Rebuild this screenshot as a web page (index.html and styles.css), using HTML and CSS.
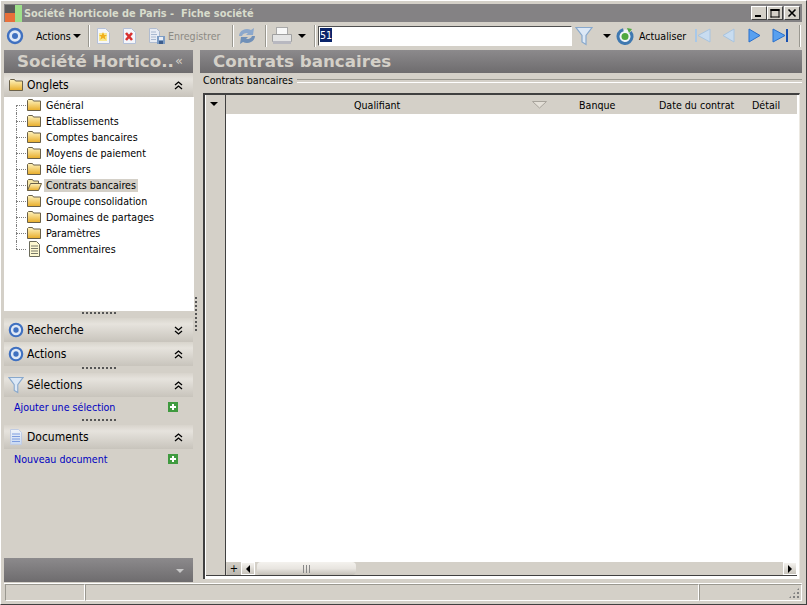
FILE: index.html
```html
<!DOCTYPE html>
<html lang="fr">
<head>
<meta charset="utf-8">
<title>Fiche société</title>
<link rel="stylesheet" href="styles.css">
</head>
<body>
<svg class="defs" width="0" height="0">
  <defs>
    <linearGradient id="fold" x1="0" y1="0" x2="0" y2="1"><stop offset="0" stop-color="#fff4c0"/><stop offset="1" stop-color="#e8ac28"/></linearGradient>
    <linearGradient id="disc" x1="0" y1="0" x2="0" y2="1"><stop offset="0" stop-color="#f0f4fa"/><stop offset="1" stop-color="#c8d8f0"/></linearGradient>
    <symbol id="folder" viewBox="0 0 16 14"><path d="M1.500 12.500V2.500l1-1h4l1 1.500h7v9.500z" fill="url(#fold)" stroke="#6a6048"/></symbol>
    <symbol id="folderopen" viewBox="0 0 16 14"><path d="M1.500 12.500V2.500l1-1h4l1 1.500h5v2" fill="#f6e6a6" stroke="#6a6048"/><path d="M1.500 12.500l3-7h11l-3 7z" fill="url(#fold)" stroke="#6a6048"/></symbol>
    <symbol id="target" viewBox="0 0 18 18"><circle cx="9" cy="9" r="7" fill="#dfe8f6" stroke="#3f70c0" stroke-width="2.400"/><circle cx="9" cy="9" r="3" fill="#3f70c0"/></symbol>
    <symbol id="funnel" viewBox="0 0 18 20"><path d="M1 1.500h16l-6 8v9l-4-2.500v-6.500z" fill="#dce8f6" stroke="#88a8cc" stroke-width="1.200"/></symbol>
    <symbol id="plus" viewBox="0 0 10 10"><rect width="10" height="10" fill="#3f9a3f"/><path d="M5 2v6M2 5h6" stroke="#fff" stroke-width="2"/></symbol>
    <symbol id="chevup" viewBox="0 0 9 9"><path d="M1 4l3.500-3 3.500 3M1 8l3.500-3 3.500 3" fill="none" stroke="#000" stroke-width="1.300"/></symbol>
    <symbol id="chevdown" viewBox="0 0 9 9"><path d="M1 1l3.500 3 3.500-3M1 5l3.500 3 3.500-3" fill="none" stroke="#000" stroke-width="1.300"/></symbol>
  </defs>
</svg>
<div class="window">
  <header class="titlebar">
    <svg class="logo" width="18" height="18" viewBox="0 0 18 18"><rect x="1" y="1" width="10" height="8" fill="#5a5a5a"/><rect x="1" y="9" width="10" height="9" fill="#e8703a"/><rect x="11" y="1" width="7" height="17" fill="#9ee08a"/></svg>
    <span class="title-text">Société Horticole de Paris -  Fiche société</span>
    <div class="wincontrols">
      <span class="winbtn"><svg width="10" height="10"><rect x="1" y="7" width="6" height="2"/></svg></span>
      <span class="winbtn"><svg width="10" height="10"><path d="M.5 1.500h9M1 1v8.500M.5 9h9M9 1v8.500M.5 2.500h9" fill="none" stroke="#000"/></svg></span>
      <span class="winbtn close"><svg width="10" height="10"><path d="M1.500 1.500l7 7M8.500 1.500l-7 7" stroke="#000" stroke-width="1.600"/></svg></span>
    </div>
  </header>

  <div class="toolbar">
    <svg class="tb-target" width="18" height="18"><use href="#target"/></svg>
    <span class="tb-actions">Actions</span><span class="caret"></span>
    <span class="sep s1"></span>
    <svg class="tb-new" width="14" height="16" viewBox="0 0 14 16"><path d="M1.500.5h8l4 4v11h-12z" fill="#f4f6fb" stroke="#b4c0d8"/><rect x="3" y="5" width="8" height="8" fill="#f8e890"/><path d="M7 4l1.200 3h2.800l-2.200 1.800 1 3-2.800-1.900-2.800 1.900 1-3-2.200-1.800h2.800z" fill="#f0b020"/></svg>
    <svg class="tb-del" width="14" height="16" viewBox="0 0 14 16"><path d="M1.500.5h8l4 4v11h-12z" fill="#f4f6fb" stroke="#b4c0d8"/><path d="M4 5l6 7M10 5l-6 7" stroke="#d83030" stroke-width="2.600"/></svg>
    <svg class="tb-save-ico" width="16" height="16" viewBox="0 0 16 16"><path d="M.5.500h7l3 3v11h-10z" fill="#e8ecf4" stroke="#b0bcd0"/><path d="M2 4h5M2 6.500h6M2 9h5M2 11.500h5" stroke="#a8b8d0"/><rect x="8" y="8" width="8" height="8" fill="#7c9cc4"/><rect x="10" y="9" width="4" height="3" fill="#e8ecf4"/><rect x="10" y="13" width="4" height="3" fill="#3c5c8c"/></svg>
    <span class="tb-save">Enregistrer</span>
    <span class="sep s2"></span>
    <svg class="tb-sync" width="20" height="20" viewBox="0 0 20 20"><path d="M2 10a8 7 0 0 1 12-6l3-2-1 7h-7l2-2a5 4 0 0 0-6 3z" fill="#8ca8cc"/><path d="M18 10a8 7 0 0 1-12 6l-3 2 1-7h7l-2 2a5 4 0 0 0 6-3z" fill="#7090b8"/></svg>
    <span class="sep s3"></span>
    <svg class="tb-print" width="20" height="18" viewBox="0 0 20 18"><rect x="4.500" y=".5" width="11" height="7" fill="#f8f8f8" stroke="#a8a8a8"/><path d="M.5 7.500h19v7h-19z" fill="#e4e4e4" stroke="#a0a0a0"/><rect x="1" y="14" width="18" height="3" fill="#b8b8c0"/></svg>
    <span class="caret c-print"></span>
    <span class="sep s4"></span>
    <div class="searchbox"><span class="selected">51</span></div>
    <svg class="tb-funnel" width="18" height="20"><use href="#funnel"/></svg>
    <span class="caret c-funnel"></span>
    <svg class="tb-refresh" width="18" height="18" viewBox="0 0 18 18"><circle cx="9" cy="9.500" r="7" fill="#f0f4f8" stroke="#3f78b0" stroke-width="3" stroke-dasharray="36 8" transform="rotate(-40 9 9.500)"/><circle cx="9" cy="9.500" r="3.500" fill="#50a840"/><path d="M11 1l5 1-3 4z" fill="#50a840"/></svg>
    <span class="tb-refresh-label">Actualiser</span>
    <svg class="nav n-first" width="16" height="15" viewBox="0 0 16 15"><rect x="0" y="1" width="2" height="13" fill="#a8c8e8"/><path d="M15 1v13L3 7.500z" fill="#c8dcf0" stroke="#a8c4e0"/></svg>
    <svg class="nav n-prev" width="13" height="15" viewBox="0 0 13 15"><path d="M12 1v13L1 7.500z" fill="#c8dcf0" stroke="#a8c4e0"/></svg>
    <svg class="nav n-next" width="13" height="15" viewBox="0 0 13 15"><path d="M1 1v13l11-6.500z" fill="#58a0f0" stroke="#2a70cc"/></svg>
    <svg class="nav n-last" width="16" height="15" viewBox="0 0 16 15"><path d="M1 1v13l12-6.500z" fill="#58a0f0" stroke="#2a70cc"/><rect x="14" y="1" width="2" height="13" fill="#1850b0"/></svg>
    <span class="sep s5"></span>
  </div>

  <div class="main">
    <aside class="sidebar">
      <div class="banner side-banner"><span class="banner-title">Société Hortico..</span><span class="collapse">«</span></div>
      <section class="pane-onglets">
        <div class="pane-head">
          <svg class="head-ico" width="16" height="14"><use href="#folder"/></svg>
          <span class="pane-title">Onglets</span>
          <svg class="chev" width="9" height="9"><use href="#chevup"/></svg>
        </div>
        <ul class="tree">
          <li><svg width="16" height="14"><use href="#folder"/></svg><span>Général</span></li>
          <li><svg width="16" height="14"><use href="#folder"/></svg><span>Etablissements</span></li>
          <li><svg width="16" height="14"><use href="#folder"/></svg><span>Comptes bancaires</span></li>
          <li><svg width="16" height="14"><use href="#folder"/></svg><span>Moyens de paiement</span></li>
          <li><svg width="16" height="14"><use href="#folder"/></svg><span>Rôle tiers</span></li>
          <li class="current"><svg width="16" height="14"><use href="#folderopen"/></svg><span>Contrats bancaires</span></li>
          <li><svg width="16" height="14"><use href="#folder"/></svg><span>Groupe consolidation</span></li>
          <li><svg width="16" height="14"><use href="#folder"/></svg><span>Domaines de partages</span></li>
          <li><svg width="16" height="14"><use href="#folder"/></svg><span>Paramètres</span></li>
          <li><svg width="16" height="16" viewBox="0 0 16 16"><path d="M3.500.5h7l3 3v12h-10z" fill="#fdf8d0" stroke="#6a6a5a"/><path d="M5 5h7M5 7.500h7M5 10h7M5 12.500h7" stroke="#7a7a6a"/></svg><span>Commentaires</span></li>
        </ul>
      </section>
      <div class="grip"></div>
      <div class="pane-head">
        <svg class="head-ico" width="16" height="16"><use href="#target"/></svg>
        <span class="pane-title">Recherche</span>
        <svg class="chev" width="9" height="9"><use href="#chevdown"/></svg>
      </div>
      <div class="pane-head">
        <svg class="head-ico" width="16" height="16"><use href="#target"/></svg>
        <span class="pane-title">Actions</span>
        <svg class="chev" width="9" height="9"><use href="#chevup"/></svg>
      </div>
      <div class="grip"></div>
      <div class="pane-head">
        <svg class="head-ico" width="16" height="18"><use href="#funnel"/></svg>
        <span class="pane-title">Sélections</span>
        <svg class="chev" width="9" height="9"><use href="#chevup"/></svg>
      </div>
      <div class="link-row"><a>Ajouter une sélection</a><svg width="10" height="10"><use href="#plus"/></svg></div>
      <div class="grip"></div>
      <div class="pane-head">
        <svg class="head-ico" width="16" height="16" viewBox="0 0 16 16"><path d="M2.500.5h8l3 3v12h-11z" fill="url(#disc)" stroke="#c0cce4"/><path d="M4 5h8M4 7.500h8M4 10h8M4 12.500h8" stroke="#7c9ce0"/></svg>
        <span class="pane-title">Documents</span>
        <svg class="chev" width="9" height="9"><use href="#chevup"/></svg>
      </div>
      <div class="link-row"><a>Nouveau document</a><svg width="10" height="10"><use href="#plus"/></svg></div>
      <div class="side-foot"><span class="foot-caret"></span></div>
    </aside>
    <div class="splitter"><span class="split-grip"></span></div>
    <main class="content">
      <div class="banner content-banner"><span class="banner-title">Contrats bancaires</span></div>
      <div class="group-label"><span>Contrats bancaires</span></div>
      <div class="grid">
        <div class="grid-inner">
          <div class="grid-rail"><span class="caret rail-caret"></span></div>
          <div class="grid-body">
            <div class="grid-head">
              <span class="col c-qual">Qualifiant</span>
              <svg class="sort" width="16" height="8"><path d="M.5.500h14l-7 6.500z" fill="#e4e0d8" stroke="#a8a49c"/></svg>
              <span class="col c-banque">Banque</span>
              <span class="col c-date">Date du contrat</span>
              <span class="col c-detail">Détail</span>
            </div>
            <div class="grid-rows"></div>
            <div class="grid-foot">
              <span class="expand">+</span>
              <span class="sb-btn"><i class="arrow-l"></i></span>
              <div class="sb-track"><div class="sb-thumb"><span class="thumb-lines"></span></div></div>
              <span class="sb-btn"><i class="arrow-r"></i></span>
            </div>
          </div>
        </div>
      </div>
    </main>
  </div>

  <footer class="statusbar">
    <span class="st st1"></span><span class="st st2"></span><span class="st st3"><i class="resize"></i></span>
  </footer>
</div>
</body>
</html>
```

FILE: styles.css
```css
* { box-sizing: border-box; }
html, body { margin: 0; padding: 0; }
body { width: 807px; height: 605px; background: #d4d0c8; font-family: "DejaVu Sans Condensed", "DejaVu Sans", sans-serif; font-stretch: condensed; font-size: 10.6px; color: #000; overflow: hidden; }
.defs { position: absolute; }
.window { width: 807px; height: 605px; display: flex; flex-direction: column; border-top: 1px solid #fff; border-left: 1px solid #fff; border-right: 1px solid #404040; border-bottom: 1px solid #404040; padding: 3px 3px 2px; }

.titlebar { height: 18px; width: 798px; background: #848284; display: flex; align-items: center; color: #d8dccc; font-weight: 700; flex: none; }
.logo { flex: none; margin-right: 2px; }
.title-text { font-size: 10.9px; white-space: pre; }
.wincontrols { margin-left: auto; display: flex; margin-right: 2px; }
.winbtn { width: 16px; height: 14px; background: #d4d0c8; border: 1px solid; border-color: #fff #404040 #404040 #fff; display: flex; align-items: center; justify-content: center; }
.winbtn.close { margin-left: 1px; }

.toolbar { height: 27px; display: flex; align-items: center; flex: none; white-space: nowrap; }
.toolbar svg { flex: none; }
.tb-target { margin-left: 2px; }
.tb-actions { margin-left: 12px; width: 35px; }
.caret { width: 0; height: 0; border: 4px solid transparent; border-top-color: #000; border-bottom: 0; margin-left: 2px; flex: none; }
.sep { width: 2px; height: 22px; border-left: 1px solid #9a9890; border-right: 1px solid #fff; flex: none; }
.s1 { margin-left: 7px; }
.tb-new { margin-left: 6px; }
.tb-del { margin-left: 12px; }
.tb-save-ico { margin-left: 13px; }
.tb-save { color: #8c8a84; margin-left: 3px; width: 53px; }
.s2 { margin-left: 11px; }
.tb-sync { margin-left: 3px; }
.s3 { margin-left: 8px; }
.tb-print { margin-left: 5px; }
.c-print { margin-left: 6px; }
.s4 { margin-left: 8px; }
.searchbox { width: 254px; height: 20px; margin-left: 2px; background: #fff; border: 1px solid; border-color: #505050 #fff #fff #505050; padding: 1px; line-height: 14px; flex: none; }
.selected { background: #0a246a; color: #fff; display: inline-block; height: 14px; }
.tb-funnel { margin-left: 3px; }
.c-funnel { margin-left: 10px; }
.tb-refresh { margin-left: 5px; }
.tb-refresh-label { margin-left: 5px; width: 46px; }
.n-first { margin-left: 10px; }
.n-prev { margin-left: 11px; }
.n-next { margin-left: 13px; }
.n-last { margin-left: 11px; }
.s5 { margin-left: 11px; }

.main { flex: 1; display: flex; min-height: 0; padding-top: 1px; }
.sidebar { width: 189px; flex: none; display: flex; flex-direction: column; }
.banner { height: 23px; padding-bottom: 2px; background: linear-gradient(#8c8a8c, #6e6c6e); display: flex; align-items: center; color: #d4d0c8; font-family: "DejaVu Sans", sans-serif; font-stretch: normal; font-weight: 700; font-size: 16.7px; flex: none; }
.side-banner { padding-left: 13px; }
.banner-title { white-space: nowrap; }
.collapse { font-size: 13px; margin-left: 1px; font-weight: 400; }
.content-banner { padding-left: 13px; margin-right: 1px; }

.pane-onglets { display: flex; flex-direction: column; }
.pane-head { height: 24px; flex: none; display: flex; align-items: center; background: linear-gradient(#d8d4cc, #e6e3dd 25%, #c8c4bc); padding-left: 4px; }
.head-ico { flex: none; margin-right: 3px; }
.pane-title { font-size: 12px; }
.chev { margin-left: auto; margin-right: 10px; flex: none; }

.tree { list-style: none; margin: 0; padding: 0; background: #fff; height: 214px; width: 190px; }
.tree li { height: 16px; display: flex; align-items: center; padding-left: 22px; position: relative; }
.tree li::before { content: ""; position: absolute; left: 12px; top: 8px; width: 10px; border-top: 1px dotted #808080; }
.tree li::after { content: ""; position: absolute; left: 12px; top: 0; height: 16px; border-left: 1px dotted #808080; }
.tree li:last-child::after { height: 8px; }
.tree li:first-child::after { top: 8px; height: 8px; }
.tree svg { flex: none; margin-right: 4px; }
.tree span { padding: 0 2px; line-height: 13px; margin-left: -2px; }
.tree .current span { background: #d4d0c8; }

.grip { height: 7px; flex: none; position: relative; }
.grip::after { content: ""; position: absolute; left: 78px; top: 1px; width: 34px; height: 2px; background: repeating-linear-gradient(90deg, #555 0 2px, transparent 2px 4px); }

.link-row { height: 21px; display: flex; align-items: center; justify-content: space-between; padding: 0 15px 2px 10px; color: #0000c0; flex: none; }
.link-row svg { flex: none; }
.side-foot { margin-top: auto; height: 24px; background: linear-gradient(#8c8a8c, #6e6c6e); position: relative; flex: none; }
.foot-caret { position: absolute; right: 9px; top: 11px; border: 4px solid transparent; border-top-color: #c8c8c8; border-bottom: 0; }

.splitter { width: 7px; flex: none; position: relative; }
.split-grip { position: absolute; left: 2px; top: 247px; width: 2px; height: 34px; background: repeating-linear-gradient(#555 0 2px, transparent 2px 4px); }

.content { flex: 1; min-width: 0; display: flex; flex-direction: column; }
.group-label { height: 20px; flex: none; position: relative; padding-left: 3px; line-height: 14px; margin-right: 1px; }
.group-label::before { content: ""; position: absolute; left: 97px; right: 0; top: 6px; height: 2px; border-top: 1px solid #9a9890; border-bottom: 1px solid #fff; }
.group-label span { position: relative; }

.grid { height: 486px; width: 597px; margin-left: 3px; background: #fff; border-top: 2px solid #404040; border-left: 2px solid #404040; border-right: 1px solid #ece9e2; padding: 0 2px 3px 1px; }
.grid-inner { height: 100%; display: grid; grid-template-columns: 20px 1fr; border-bottom: 1px solid #404040; background: #d4d0c8; }
.grid-rail { border-right: 1px solid #404040; padding: 7px 0 0 4px; }
.rail-caret { display: block; margin: 0; }
.grid-body { display: flex; flex-direction: column; min-height: 0; min-width: 0; }
.grid-head { height: 19px; position: relative; flex: none; }
.col { position: absolute; top: 3px; line-height: 14px; }
.c-qual { left: 128px; }
.sort { position: absolute; left: 306px; top: 6px; }
.c-banque { left: 353px; }
.c-date { left: 433px; }
.c-detail { left: 526px; }
.grid-rows { flex: 1; background: #fff; }
.grid-foot { display: flex; align-items: center; height: 13px; flex: none; padding-left: 1px; }
.expand { width: 14px; height: 13px; text-align: center; font-size: 11px; line-height: 13px; background: linear-gradient(#d4d0c8, #bcb8b0); }
.sb-btn { width: 14px; height: 13px; background: linear-gradient(#f4f2ee, #c8c4bc); display: flex; align-items: center; justify-content: center; border: 1px solid #fff; flex: none; }
.arrow-l { border: 4px solid transparent; border-right-color: #000; border-left: 0; }
.arrow-r { border: 4px solid transparent; border-left-color: #000; border-right: 0; }
.sb-track { flex: 1; height: 13px; display: flex; align-items: center; padding-left: 2px; }
.sb-thumb { width: 99px; height: 13px; border-radius: 4px; background: linear-gradient(#f4f2ee, #e8e5e0 50%, #c4c0b8); display: flex; align-items: center; justify-content: center; }
.thumb-lines { width: 7px; height: 8px; background: repeating-linear-gradient(90deg, #888 0 1px, transparent 1px 3px); }

.statusbar { height: 19px; width: 798px; flex: none; display: flex; margin-top: 1px; border-top: 1px solid #fff; padding: 0 0 1px 1px; }
.st { height: 100%; border: 1px solid; border-color: #9a9890 #fff #fff #9a9890; display: block; }
.st1 { width: 80px; }
.st2 { width: 614px; }
.st3 { flex: 1; position: relative; }
.resize { position: absolute; right: 1px; bottom: 1px; width: 12px; height: 12px; background: radial-gradient(circle, #808080 1px, transparent 1.200px) 0 0 / 4px 4px; clip-path: polygon(100% 0, 100% 100%, 0 100%); }
```
